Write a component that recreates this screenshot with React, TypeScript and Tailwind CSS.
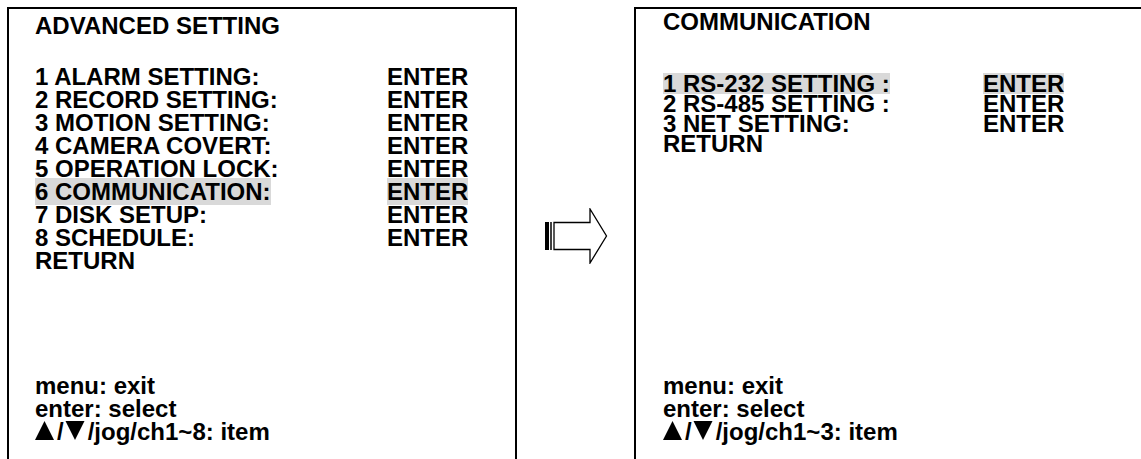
import React from "react";

const font = { fontFamily: '"Liberation Sans", Arial, sans-serif' };

function Up() {
  return (
    <svg width="22" height="19" viewBox="0 0 22 19" className="inline-block align-baseline">
      <polygon points="9.5,0 19,19 0,19" fill="#000" />
    </svg>
  );
}
function Down() {
  return (
    <svg width="24" height="19" viewBox="0 0 24 19" className="inline-block align-baseline">
      <polygon points="1.5,0 20.5,0 11,19" fill="#000" />
    </svg>
  );
}

type Row = { label: string; sel?: boolean; enter?: boolean };

function Panel({
  title,
  rows,
  labelW,
  ch,
  widthCls,
  rowLh,
  titleCls,
  rowsMt,
  hlCls,
}: {
  title: string;
  rows: Row[];
  labelW: string;
  ch: string;
  widthCls: string;
  rowLh: string;
  titleCls: string;
  rowsMt: string;
  hlCls: string;
}) {
  return (
    <div className={`${widthCls} h-[480px] shrink-0 border-2 border-black flex flex-col`}>
      <div className={`pl-[26px] ${titleCls} text-[24px] font-bold leading-[23px] text-black`}>
        <div>{title}</div>
        <div className={`${rowsMt} ${rowLh}`}>
          {rows.map((r) => (
            <div key={r.label} className="flex">
              <div className={labelW}>
                <span className={r.sel ? hlCls : ""}>{r.label}</span>
              </div>
              {r.enter !== false && (
                <div>
                  <span className={r.sel ? hlCls : ""}>ENTER</span>
                </div>
              )}
            </div>
          ))}
        </div>
      </div>
      <div className="pl-[26px] mt-auto mb-[42px] text-[24px] font-bold leading-[23px] text-black">
        <div>menu: exit</div>
        <div>enter: select</div>
        <div>
          <Up />/<Down />/jog/ch1~{ch}: item
        </div>
      </div>
    </div>
  );
}

export default function App() {
  return (
    <div className="w-[1141px] h-[459px] bg-white overflow-hidden flex items-start pt-[7px] pl-[7px]" style={font}>
      <Panel
        title="ADVANCED SETTING"
        labelW="w-[352px]"
        ch="8"
        widthCls="w-[510px]"
        rowLh="leading-[23px]"
        titleCls="pt-[5px]"
        rowsMt="mt-[28px]"
        hlCls="bg-[#d9d9d9]"
        rows={[
          { label: "1 ALARM SETTING:" },
          { label: "2 RECORD SETTING:" },
          { label: "3 MOTION SETTING:" },
          { label: "4 CAMERA COVERT:" },
          { label: "5 OPERATION LOCK:" },
          { label: "6 COMMUNICATION:", sel: true },
          { label: "7 DISK SETUP:" },
          { label: "8 SCHEDULE:" },
          { label: "RETURN", enter: false },
        ]}
      />
      <div className="w-[117px] shrink-0 pt-[201px] pl-[28px]">
        <svg width="64" height="56" viewBox="0 0 64 56">
          <rect x="0" y="14" width="4" height="28" fill="#000" />
          <line x1="6" y1="14" x2="6" y2="42" stroke="#000" strokeWidth="1.5" />
          <polygon
            points="9,14.5 45,14.5 45,1 61.5,28 45,55 45,41.5 9,41.5"
            fill="#fff"
            stroke="#000"
            strokeWidth="1.3"
          />
        </svg>
      </div>
      <Panel
        title="COMMUNICATION"
        labelW="w-[320px]"
        ch="3"
        widthCls="w-[530px] pl-[1px]"
        rowLh="leading-[20px]"
        titleCls="pt-[1px]"
        rowsMt="mt-[40px]"
        hlCls="bg-[#d9d9d9] inline-block h-[21px] leading-[22px]"
        rows={[
          { label: "1 RS-232 SETTING :", sel: true },
          { label: "2 RS-485 SETTING :" },
          { label: "3 NET SETTING:" },
          { label: "RETURN", enter: false },
        ]}
      />
    </div>
  );
}
